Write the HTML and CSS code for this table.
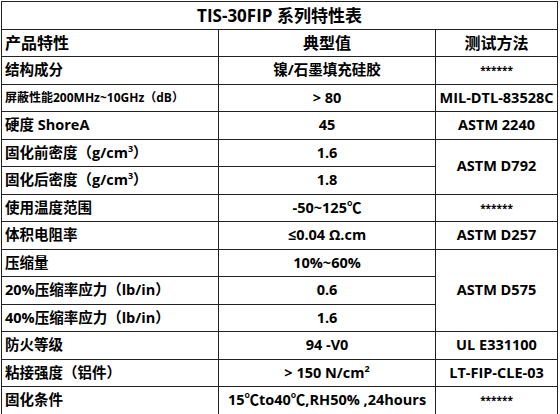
FILE: index.html
```html
<!DOCTYPE html>
<html lang="zh-CN">
<head>
    <meta charset="UTF-8">
    <meta name="viewport" content="width=device-width, initial-scale=1.0">
    <title>TIS-30FIP 系列特性表</title>
    <link rel="stylesheet" href="styles.css">
</head>
<body>
    <table class="spec">
        <colgroup>
            <col class="c-name">
            <col class="c-val">
            <col class="c-test">
        </colgroup>
        <tr><td class="title" colspan="3">TIS-30FIP 系列特性表</td></tr>
        <tr class="head">
            <td class="name">产品特性</td>
            <td>典型值</td>
            <td>测试方法</td>
        </tr>
        <tr>
            <td class="name">结构成分</td>
            <td>镍/石墨填充硅胶</td>
            <td class="stars">******</td>
        </tr>
        <tr>
            <td class="name small">屏蔽性能200MHz~10GHz（dB）</td>
            <td>&gt; 80</td>
            <td>MIL-DTL-83528C</td>
        </tr>
        <tr>
            <td class="name">硬度 ShoreA</td>
            <td>45</td>
            <td>ASTM 2240</td>
        </tr>
        <tr>
            <td class="name">固化前密度（g/cm<sup>3</sup>）</td>
            <td>1.6</td>
            <td rowspan="2">ASTM D792</td>
        </tr>
        <tr>
            <td class="name">固化后密度（g/cm<sup>3</sup>）</td>
            <td>1.8</td>
        </tr>
        <tr>
            <td class="name">使用温度范围</td>
            <td>-50~125℃</td>
            <td class="stars">******</td>
        </tr>
        <tr>
            <td class="name">体积电阻率</td>
            <td>≤0.04 Ω.cm</td>
            <td>ASTM D257</td>
        </tr>
        <tr>
            <td class="name">压缩量</td>
            <td>10%~60%</td>
            <td rowspan="3">ASTM D575</td>
        </tr>
        <tr>
            <td class="name">20%压缩率应力（lb/in）</td>
            <td>0.6</td>
        </tr>
        <tr>
            <td class="name">40%压缩率应力（lb/in）</td>
            <td>1.6</td>
        </tr>
        <tr>
            <td class="name">防火等级</td>
            <td>94 -V0</td>
            <td>UL E331100</td>
        </tr>
        <tr>
            <td class="name">粘接强度（铝件）</td>
            <td>&gt; 150 N/cm<sup>2</sup></td>
            <td>LT-FIP-CLE-03</td>
        </tr>
        <tr>
            <td class="name">固化条件</td>
            <td>15℃to40℃,RH50% ,24hours</td>
            <td class="stars">******</td>
        </tr>
    </table>
</body>
</html>
```

FILE: styles.css
```css
body {
    margin: 0;
    padding: 1px 0 0 1px;
    background: #fff;
    color: #000;
    font-family: "Open Sans", "Noto Sans CJK SC", sans-serif;
    font-weight: bold;
}
.spec {
    border-collapse: collapse;
    width: 556px;
    table-layout: fixed;
}
.c-name { width: 217px; }
.c-val { width: 217px; }
.c-test { width: 122px; }
.spec td {
    border: 1.5px solid #222;
    height: 26.5px;
    padding: 0 3px;
    font-size: 14.5px;
    text-align: center;
    white-space: nowrap;
    line-height: 1;
}
.spec td.name { text-align: left; }
.spec td.small { font-size: 12px; }
.spec .title { font-size: 17px; }
.spec .head td { font-size: 16px; }
.spec .stars { font-size: 10px; }
sup {
    font-size: 9px;
    line-height: 0;
    vertical-align: 6px;
}
```
